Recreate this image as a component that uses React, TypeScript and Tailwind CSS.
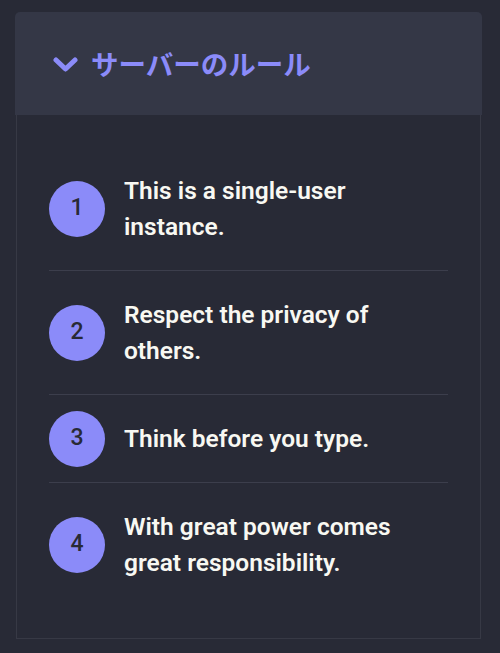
import React from "react";

const rules = [
  "This is a single-user instance.",
  "Respect the privacy of others.",
  "Think before you type.",
  "With great power comes great responsibility.",
];

export default function App() {
  return (
    <div className="min-h-[653px] w-[500px] bg-[#282a36] pt-[12px] pl-[15px] pr-[18px] pb-[15px]" style={{ fontFamily: "Roboto, 'Noto Sans CJK JP', sans-serif" }}>
      <div className="flex h-[103px] items-center gap-[13px] rounded-t-[5px] bg-[#343746] pl-[38px]">
        <svg width="25" height="16" viewBox="0 0 25 16" className="mt-[2px]">
          <path d="M3 3 L12.5 12 L22 3" fill="none" stroke="#8b8bf9" strokeWidth="5" strokeLinecap="round" strokeLinejoin="round" />
        </svg>
        <span className="text-[27.5px] font-bold text-[#8b8bf9]" style={{ fontFamily: "'Noto Sans CJK JP', sans-serif" }}>サーバーのルール</span>
      </div>
      <div className="mx-[1px] border border-t-0 border-[#373945] px-[32px] pt-[32px] pb-[32px]">
        {rules.map((r, i) => (
          <div key={i} className={`flex items-center gap-[19px] py-[15.5px] ${i < rules.length - 1 ? "border-b border-[#3c3e4c]" : ""}`}>
            <div className="flex h-[56px] w-[56px] shrink-0 items-center justify-center rounded-full bg-[#8b8bf9] text-[23px] font-medium text-[#282a36]">
              {i + 1}
            </div>
            <div className="py-[10px] pr-[40px] text-[24.5px] font-semibold leading-[36px] text-[#f8f8f2]">{r}</div>
          </div>
        ))}
      </div>
    </div>
  );
}
